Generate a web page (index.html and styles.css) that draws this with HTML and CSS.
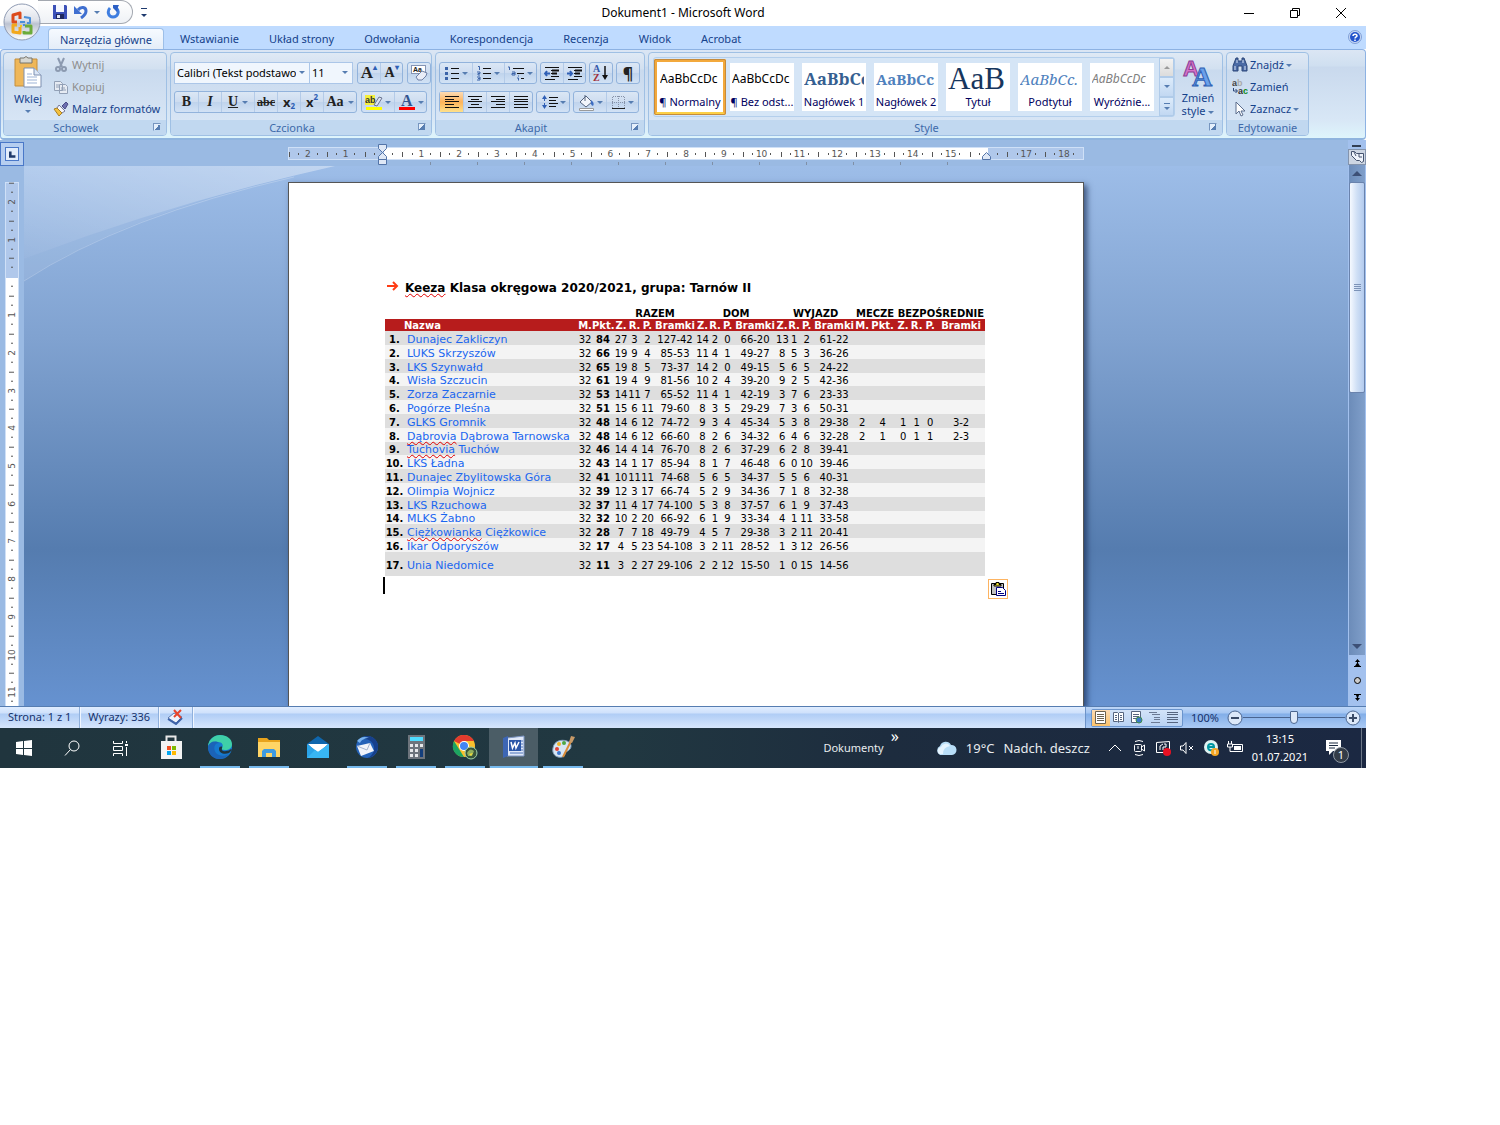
FILE: index.html
```html
<!DOCTYPE html>
<html lang="pl">
<head>
    <meta charset="UTF-8">
    <meta name="viewport" content="width=device-width, initial-scale=1.0">
    <title>Dokument1 - Microsoft Word</title>
    <link rel="stylesheet" href="styles.css">
</head>
<body>

<div class="screen">

    <!-- Title bar -->
    <header class="titlebar">
        <div class="quick">
            <div class="quick-bar">
                <button class="quick-btn" aria-label="Zapisz">
                    <svg width="16" height="16" viewBox="0 0 16 16"><path d="M1 1h13l1 1v13H1z" fill="#3b50b8"/><path d="M4 1h8v7H4z" fill="#f4f7ff"/><path d="M4 10h8v5H4z" fill="#20285e"/><path d="M5 11h3v3H5z" fill="#dfe6f8"/></svg>
                </button>
                <button class="quick-btn" aria-label="Cofnij">
                    <svg width="14" height="14" viewBox="0 0 14 14"><path d="M4 5c3-4 8-3 8 1 0 3-2 5-5 7" fill="none" stroke="#3f6fd0" stroke-width="3"/><path d="M0 1v8h8z" fill="#3f6fd0"/></svg>
                </button>
                <span class="arrow"></span>
                <button class="quick-btn redo" aria-label="Powtórz">
                    <svg width="14" height="14" viewBox="0 0 14 14"><path d="M4 3C1 6 2 12 7 12s7-6 3-9" fill="none" stroke="#3f7ee0" stroke-width="3"/><path d="M7 0h6l-1 2-1 5-4-4z" fill="#2b5fc4"/></svg>
                </button>
            </div>
            <button class="quick-more" aria-label="Dostosuj pasek"><span class="arrow dark"></span></button>
        </div>
        <h1 class="title">Dokument1 - Microsoft Word</h1>
        <div class="window-buttons">
            <button aria-label="Minimalizuj"><svg width="12" height="12" viewBox="0 0 12 12"><path d="M1 6.5h10" stroke="#000"/></svg></button>
            <button aria-label="Przywróć"><svg width="12" height="12" viewBox="0 0 12 12"><path d="M1.500 3.500h7v7h-7zM3.500 3V1.500h7v7H9" fill="none" stroke="#000"/></svg></button>
            <button aria-label="Zamknij"><svg width="12" height="12" viewBox="0 0 12 12"><path d="M1 1l10 10M11 1L1 11" stroke="#000"/></svg></button>
        </div>
        <button class="office" aria-label="Przycisk pakietu Office">
            <svg width="40" height="40" viewBox="0 0 40 40">
                <defs>
                    <linearGradient id="orb" x1="0" y1="0" x2="0" y2="1"><stop offset="0" stop-color="#fdfdfe"/><stop offset=".45" stop-color="#dde1ea"/><stop offset=".55" stop-color="#bcc3d2"/><stop offset="1" stop-color="#fff"/></linearGradient>
                </defs>
                <circle cx="20" cy="20" r="18" fill="url(#orb)" stroke="#8f9bb3"/>
                <g fill="none" stroke-width="3" stroke-linejoin="round">
                    <path d="M15 20h-4v-7l7-2v6" stroke="#dc4a1c"/>
                    <path d="M22 15l6 1v5h-3M20 20h3" stroke="#4a8fd8" stroke-width="2"/>
                    <path d="M15 23h-4v7l7 1v-6" stroke="#f2a81e"/>
                    <path d="M22 29v2h7v-7h-6" stroke="#6cab3a"/>
                </g>
                <path d="M18 19h2v2h-2zM21 22h2v2h-2z" fill="#4a8fd8"/>
                <path d="M18 23h2v2h-2z" fill="#f2c81e"/>
            </svg>
        </button>
    </header>

    <!-- Ribbon tabs -->
    <nav class="tabs">
        <a href="#" class="tab active">Narzędzia główne</a>
        <a href="#" class="tab">Wstawianie</a>
        <a href="#" class="tab">Układ strony</a>
        <a href="#" class="tab">Odwołania</a>
        <a href="#" class="tab">Korespondencja</a>
        <a href="#" class="tab">Recenzja</a>
        <a href="#" class="tab">Widok</a>
        <a href="#" class="tab">Acrobat</a>
        <button class="help" aria-label="Pomoc">
            <svg width="14" height="14" viewBox="0 0 14 14"><circle cx="7" cy="7" r="6.5" fill="#c8d8f4" stroke="#7f9fd6"/><circle cx="7" cy="7" r="5" fill="#2455cc"/><path d="M5 6c0-2.500 4-2.500 4 0C9 7 7 7 7 8.500M7 9.500v1.500" fill="none" stroke="#fff" stroke-width="1.500"/></svg>
        </button>
    </nav>

    <!-- Ribbon -->
    <div class="ribbon">
        <section class="group clipboard">
            <div class="group-body">
                <button class="paste">
                    <svg width="30" height="32" viewBox="0 0 30 32"><path d="M2 3h22v27H2z" fill="#efb759" stroke="#c48f3f"/><path d="M7 2h4q2-3 4 0h4v5H7z" fill="#d7d7d2" stroke="#77746c"/><path d="M11 12h10l7 7v12H11z" fill="#fff" stroke="#7c8fb0"/><path d="M21 12v7h7" fill="#dbe6f6" stroke="#7c8fb0"/><path d="M14 18h5M14 21h10M14 24h10M14 27h10" stroke="#9db3d6"/></svg>
                    <span>Wklej</span>
                    <span class="arrow"></span>
                </button>
                <div class="stack">
                    <button class="line disabled"><svg width="16" height="16" viewBox="0 0 16 16"><path d="M5 1l4 9M11 1L7 10" stroke="#8c9ab0" stroke-width="2"/><circle cx="5" cy="12" r="2" fill="none" stroke="#8c9ab0" stroke-width="2"/><circle cx="11" cy="12" r="2" fill="none" stroke="#8c9ab0" stroke-width="2"/></svg>Wytnij</button>
                    <button class="line disabled"><svg width="16" height="16" viewBox="0 0 16 16"><path d="M1.500 2.500h6l2 2v7h-8zM6.500 5.500h6l2 2v7h-8z" fill="#e6ebf3" stroke="#92a0b6"/><path d="M3 6h3M3 8h3M8 9h4M8 11h5" stroke="#92a0b6"/></svg>Kopiuj</button>
                    <button class="line"><svg width="16" height="16" viewBox="0 0 16 16"><path d="M9 5l4-4 2 2-3 5z" fill="#6d6fb0" stroke="#4a4c88"/><path d="M6 4l6 6-3 2-5-5z" fill="#f5f5fa" stroke="#777a9b"/><path d="M1 8l3-1 5 5-3 3z" fill="#f4c13d" stroke="#a9802a"/></svg>Malarz formatów</button>
                </div>
            </div>
            <footer class="group-label">Schowek<i class="launch"></i></footer>
        </section>

        <section class="group font">
            <div class="group-body rows">
                <div class="tool-row">
                    <div class="combos">
                        <div class="combo wide"><select aria-label="Czcionka"><option>Calibri (Tekst podstawowy)</option></select></div>
                        <div class="combo"><select aria-label="Rozmiar czcionki"><option>11</option></select></div>
                    </div>
                    <div class="btns narrow">
                        <button class="serif big" aria-label="Powiększ czcionkę">A<sup>▴</sup></button>
                        <button class="serif" aria-label="Zmniejsz czcionkę">A<sup>▾</sup></button>
                    </div>
                    <div class="btns narrow">
                        <button aria-label="Wyczyść formatowanie"><svg width="18" height="18" viewBox="0 0 18 18"><rect x="1.500" y="1.500" width="14" height="8" fill="#fff" stroke="#8595b5"/><text x="3" y="8" font-size="7" font-weight="bold" font-family="Liberation Sans" fill="#222">Aa</text><path d="M6 13l6-6 5 2-1 3-4 4H8z" fill="#e9edf8" stroke="#6f7fa4"/></svg></button>
                    </div>
                </div>
                <div class="tool-row">
                    <div class="btns">
                        <button class="serif"><b>B</b></button>
                        <button class="serif"><i>I</i></button>
                        <button class="serif drop"><u>U</u><span class="arrow"></span></button>
                        <button class="serif small"><s>abc</s></button>
                        <button class="x">x<sub>2</sub></button>
                        <button class="x">x<sup>2</sup></button>
                        <button class="serif drop">Aa<span class="arrow"></span></button>
                    </div>
                    <div class="btns">
                        <button class="drop" aria-label="Kolor wyróżnienia"><svg width="18" height="18" viewBox="0 0 18 18"><path d="M0 2h10v10H0z" fill="#f5ef3a"/><text x="0" y="10" font-size="9" font-weight="bold" font-family="Liberation Sans" fill="#333">ab</text><path d="M9 12l5-8 3 1-5 8z" fill="#dce4f3" stroke="#6b7590"/><path d="M1 14h16v3H1z" fill="#ff0"/></svg><span class="arrow"></span></button>
                        <button class="drop" aria-label="Kolor czcionki"><svg width="18" height="18" viewBox="0 0 18 18"><text x="3" y="13" font-size="16" font-weight="bold" font-family="Liberation Serif" fill="#33558f">A</text><path d="M1 14h16v3H1z" fill="#f00"/></svg><span class="arrow"></span></button>
                    </div>
                </div>
            </div>
            <footer class="group-label">Czcionka<i class="launch"></i></footer>
        </section>

        <section class="group paragraph">
            <div class="group-body rows">
                <div class="tool-row">
                    <div class="btns">
                        <button class="drop list" aria-label="Punktory"><svg width="15" height="15" viewBox="0 0 15 15"><path d="M6 2.500h8M6 7.500h8M6 12.500h8" stroke="#111"/><path d="M0 1h3v3H0zM0 6h3v3H0zM0 11h3v3H0z" fill="#3b63a8"/></svg><span class="arrow"></span></button>
                        <button class="drop list" aria-label="Numerowanie"><svg width="15" height="15" viewBox="0 0 15 15"><path d="M6 2.500h8M6 7.500h8M6 12.500h8" stroke="#111"/><path d="M1 .5h1.500V4M0 6h3v1.500H1V9h2M0 11h3v3H0M1 12.500h2" fill="none" stroke="#3b63a8"/></svg><span class="arrow"></span></button>
                        <button class="drop list" aria-label="Lista wielopoziomowa"><svg width="17" height="15" viewBox="0 0 17 15"><path d="M5 2.500h11M9 7.500h7M13 12.500h3" stroke="#111"/><path d="M0 1h1.500v3M4 6h3v3H4V7.500h3M10.500 9.500v1M9 12h1.500v2.500" fill="none" stroke="#3b63a8"/></svg><span class="arrow"></span></button>
                    </div>
                    <div class="btns narrow">
                        <button aria-label="Zmniejsz wcięcie"><svg width="16" height="15" viewBox="0 0 16 15"><path d="M1 1.500h14M7 4.500h8M7 7.500h6M7 10.500h8M1 13.500h10" stroke="#111"/><path d="M8 4.500h7M8 7.500h5" stroke="#111" stroke-width="2"/><path d="M6 7.500H1M3 5L1 7.500 3 10" fill="none" stroke="#2f5fb5" stroke-width="2"/></svg></button>
                        <button aria-label="Zwiększ wcięcie"><svg width="16" height="15" viewBox="0 0 16 15"><path d="M1 1.500h14M7 4.500h8M7 7.500h6M7 10.500h8M1 13.500h10" stroke="#111"/><path d="M8 4.500h7M8 7.500h5" stroke="#111" stroke-width="2"/><path d="M0 7.500h5M3 5l2 2.500L3 10" fill="none" stroke="#2f5fb5" stroke-width="2"/></svg></button>
                    </div>
                    <div class="btns narrow">
                        <button aria-label="Sortuj"><svg width="18" height="18" viewBox="0 0 18 18"><text x="1" y="8" font-size="10" font-weight="bold" font-family="Liberation Serif" fill="#3558a8">A</text><text x="1" y="17" font-size="10" font-weight="bold" font-family="Liberation Serif" fill="#a0303a">Z</text><path d="M13 2v11" stroke="#111" stroke-width="1.500"/><path d="M10 11h6l-3 5z" fill="#111"/></svg></button>
                    </div>
                    <div class="btns narrow">
                        <button class="pilcrow" aria-label="Pokaż wszystko">¶</button>
                    </div>
                </div>
                <div class="tool-row">
                    <div class="btns">
                        <button class="on" aria-label="Do lewej"><svg width="16" height="12" viewBox="0 0 16 12"><path d="M1 .5h14M1 3.500h9M1 5.500h14M1 8.500h9M1 11.500h14" stroke="#111"/></svg></button>
                        <button aria-label="Wyśrodkuj"><svg width="16" height="12" viewBox="0 0 16 12"><path d="M1 .5h14M4 3.500h8M1 5.500h14M4 8.500h8M1 11.500h14" stroke="#111"/></svg></button>
                        <button aria-label="Do prawej"><svg width="16" height="12" viewBox="0 0 16 12"><path d="M1 .5h14M6 3.500h9M1 5.500h14M6 8.500h9M1 11.500h14" stroke="#111"/></svg></button>
                        <button aria-label="Wyjustuj"><svg width="16" height="12" viewBox="0 0 16 12"><path d="M1 .5h14M1 3.500h14M1 5.500h14M1 8.500h14M1 11.500h14" stroke="#111"/></svg></button>
                    </div>
                    <div class="btns">
                        <button class="drop" aria-label="Interlinia"><svg width="17" height="16" viewBox="0 0 17 16"><path d="M3.500 2v12" stroke="#2f5fb5" stroke-dasharray="5 2"/><path d="M1 5l2.500-4L6 5zM1 11l2.500 4L6 11z" fill="#2f5fb5"/><path d="M8 3.500h9M8 6.500h7M8 9.500h9M8 12.500h7" stroke="#111"/></svg><span class="arrow"></span></button>
                    </div>
                    <div class="btns">
                        <button class="drop" aria-label="Cieniowanie"><svg width="17" height="17" viewBox="0 0 17 17"><path d="M2 8l6-6 6 6-6 5z" fill="#f2f5fb" stroke="#55647f"/><path d="M7 1v6" stroke="#55647f"/><path d="M13 6q4 3 2 6-3-1-2-6z" fill="#3d6dc2"/><path d="M1.500 14.500h14v2h-14z" fill="#fff" stroke="#9a9a9a"/></svg><span class="arrow"></span></button>
                        <button class="drop" aria-label="Obramowanie"><svg width="15" height="15" viewBox="0 0 15 15"><path d="M1.500 13V1.500h12V13M7.500 1v12M1 7.500h13" fill="none" stroke="#8792a8" stroke-dasharray="1 1"/><path d="M1 13.500h13" stroke="#222"/></svg><span class="arrow"></span></button>
                    </div>
                </div>
            </div>
            <footer class="group-label">Akapit<i class="launch"></i></footer>
        </section>

        <section class="group styles">
            <div class="group-body">
                <div class="gallery">
                    <button class="style selected"><span class="sample">AaBbCcDc</span><span class="style-name">¶ Normalny</span></button>
                    <button class="style"><span class="sample">AaBbCcDc</span><span class="style-name">¶ Bez odst...</span></button>
                    <button class="style"><span class="sample heading1">AaBbCc</span><span class="style-name">Nagłówek 1</span></button>
                    <button class="style"><span class="sample heading2">AaBbCc</span><span class="style-name">Nagłówek 2</span></button>
                    <button class="style"><span class="sample headline">AaB</span><span class="style-name">Tytuł</span></button>
                    <button class="style"><span class="sample subtitle">AaBbCc.</span><span class="style-name">Podtytuł</span></button>
                    <button class="style"><span class="sample emphasis">AaBbCcDc</span><span class="style-name">Wyróżnie...</span></button>
                    <div class="gallery-scroll">
                        <button class="off" aria-label="W górę"><span class="arrow up"></span></button>
                        <button aria-label="W dół"><span class="arrow"></span></button>
                        <button aria-label="Więcej"><span class="more"><span class="arrow"></span></span></button>
                    </div>
                </div>
                <button class="change">
                    <svg width="32" height="32" viewBox="0 0 32 32"><text x="1" y="19" font-size="22" font-weight="bold" font-family="Liberation Sans" fill="#d673c8" stroke="#8b3f96">A</text><text x="10" y="29" font-size="28" font-weight="bold" font-family="Liberation Serif" fill="#6aa0ea" stroke="#2f60b4">A</text></svg>
                    <span>Zmień</span>
                    <span>style <span class="arrow"></span></span>
                </button>
            </div>
            <footer class="group-label">Style<i class="launch"></i></footer>
        </section>

        <section class="group editing">
            <div class="group-body">
                <div class="stack">
                    <button class="line"><svg width="16" height="16" viewBox="0 0 16 16"><path d="M4 1h2v3h4V1h2l3 8v5h-5v-5H6v5H1V9z" fill="#4b6ba5" stroke="#2c4779"/><path d="M3 9v4M13 9v4M5 3v3M11 3v3" stroke="#dbe6f8"/></svg>Znajdź<span class="arrow"></span></button>
                    <button class="line"><svg width="16" height="16" viewBox="0 0 16 16"><text x="0" y="7" font-size="9" font-weight="bold" font-family="Liberation Sans" fill="#444">a<tspan fill="#aaa">b</tspan></text><text x="6" y="15" font-size="9" font-weight="bold" font-family="Liberation Sans" fill="#333">a<tspan fill="#0a8a1a">c</tspan></text><path d="M1.500 9v3H5M3.500 10L5.500 12l-2 2" fill="none" stroke="#2c4779"/></svg>Zamień</button>
                    <button class="line"><svg width="16" height="16" viewBox="0 0 16 16"><path d="M4 1v12l3-3 2 5 2-1-2-4h4z" fill="#fff" stroke="#5b6c8c"/></svg>Zaznacz<span class="arrow"></span></button>
                </div>
            </div>
            <footer class="group-label plain">Edytowanie</footer>
        </section>
    </div>

    <!-- Document area with rulers -->
    <main class="workspace">
        <div class="corner"><button aria-label="Tabulator lewy"><svg width="14" height="14" viewBox="0 0 14 14"><path d="M5 4v6h6" fill="none" stroke="#1f3a6b" stroke-width="3"/></svg></button></div>
        <div class="ruler-row">
            <div class="ruler">
                <span>2</span><span>1</span><span></span><span>1</span><span>2</span><span>3</span><span>4</span><span>5</span><span>6</span><span>7</span><span>8</span><span>9</span><span>10</span><span>11</span><span>12</span><span>13</span><span>14</span><span>15</span><span></span><span>17</span><span>18</span>
                <svg class="marker left" width="11" height="22" viewBox="0 0 11 22"><path d="M1.500.5h8v4l-4 4 4 4v3h-8v-3l4-4-4-4zM1.500 15.500h8v5h-8z" fill="#dfe8f6" stroke="#5374a8"/></svg>
                <svg class="marker right" width="11" height="22" viewBox="0 0 11 22"><path d="M1.500 15.500v-3l4-4 4 4v3z" fill="#dfe8f6" stroke="#5374a8"/></svg>
            </div>
        </div>
        <div class="vruler-col">
            <div class="vruler">
                <span>2</span><span>1</span><span></span><span>1</span><span>2</span><span>3</span><span>4</span><span>5</span><span>6</span><span>7</span><span>8</span><span>9</span><span>10</span><span>11</span>
            </div>
        </div>
        <div class="canvas">
            <svg class="swoosh" width="330" height="130" viewBox="0 0 330 130">
                <defs><linearGradient id="sheen" x1="0" y1="1" x2="1" y2="0"><stop offset="0" stop-color="#fff" stop-opacity=".1"/><stop offset="1" stop-color="#fff" stop-opacity=".38"/></linearGradient></defs>
                <path d="M0 0h311Q150 36 0 93z" fill="url(#sheen)"/>
                <path d="M311 0Q110 42 0 115V93Q150 36 311 0z" fill="#fff" fill-opacity=".08"/>
                <path d="M270 11Q100 50 0 115" fill="none" stroke="#fff" stroke-opacity=".22"/>
            </svg>
            <article class="page">
                <h2 class="doc-title">
                    <svg width="12" height="10" viewBox="0 0 12 10"><path d="M0 5h10M6 1l4 4-4 4" fill="none" stroke="#ff3c14" stroke-width="2"/></svg>
                    <span><span class="typo">Keeza</span> Klasa okręgowa 2020/2021, grupa: Tarnów II</span>
                </h2>
                <table class="standings">
                    <colgroup>
                        <col class="c-no"><col class="c-name"><col class="c-m"><col class="c-pkt">
                        <col class="c-m"><col class="c-n"><col class="c-n"><col class="c-goals">
                        <col class="c-n"><col class="c-s"><col class="c-n"><col class="c-goals">
                        <col class="c-s"><col class="c-s"><col class="c-n"><col class="c-goals">
                        <col class="c-m"><col class="c-wide"><col class="c-m"><col class="c-n"><col class="c-m"><col>
                    </colgroup>
                    <thead>
                        <tr class="sections"><th colspan="4"></th><th colspan="4">RAZEM</th><th colspan="4">DOM</th><th colspan="4">WYJAZD</th><th colspan="6">MECZE BEZPOŚREDNIE</th></tr>
                        <tr class="heads"><th></th><th class="name">Nazwa</th><th>M.</th><th>Pkt.</th><th>Z.</th><th>R.</th><th>P.</th><th>Bramki</th><th>Z.</th><th>R.</th><th>P.</th><th>Bramki</th><th>Z.</th><th>R.</th><th>P.</th><th>Bramki</th><th>M.</th><th>Pkt.</th><th>Z.</th><th>R.</th><th>P.</th><th>Bramki</th></tr>
                    </thead>
                    <tbody>
                        <tr><th>1.</th><td class="name"><a href="#">Dunajec Zakliczyn</a></td><td>32</td><td><b>84</b></td><td>27</td><td>3</td><td>2</td><td>127-42</td><td>14</td><td>2</td><td>0</td><td>66-20</td><td>13</td><td>1</td><td>2</td><td>61-22</td><td colspan="6"></td></tr>
                        <tr><th>2.</th><td class="name"><a href="#">LUKS Skrzyszów</a></td><td>32</td><td><b>66</b></td><td>19</td><td>9</td><td>4</td><td>85-53</td><td>11</td><td>4</td><td>1</td><td>49-27</td><td>8</td><td>5</td><td>3</td><td>36-26</td><td colspan="6"></td></tr>
                        <tr><th>3.</th><td class="name"><a href="#">LKS Szynwałd</a></td><td>32</td><td><b>65</b></td><td>19</td><td>8</td><td>5</td><td>73-37</td><td>14</td><td>2</td><td>0</td><td>49-15</td><td>5</td><td>6</td><td>5</td><td>24-22</td><td colspan="6"></td></tr>
                        <tr><th>4.</th><td class="name"><a href="#">Wisła Szczucin</a></td><td>32</td><td><b>61</b></td><td>19</td><td>4</td><td>9</td><td>81-56</td><td>10</td><td>2</td><td>4</td><td>39-20</td><td>9</td><td>2</td><td>5</td><td>42-36</td><td colspan="6"></td></tr>
                        <tr><th>5.</th><td class="name"><a href="#">Zorza Zaczarnie</a></td><td>32</td><td><b>53</b></td><td>14</td><td>11</td><td>7</td><td>65-52</td><td>11</td><td>4</td><td>1</td><td>42-19</td><td>3</td><td>7</td><td>6</td><td>23-33</td><td colspan="6"></td></tr>
                        <tr><th>6.</th><td class="name"><a href="#">Pogórze Pleśna</a></td><td>32</td><td><b>51</b></td><td>15</td><td>6</td><td>11</td><td>79-60</td><td>8</td><td>3</td><td>5</td><td>29-29</td><td>7</td><td>3</td><td>6</td><td>50-31</td><td colspan="6"></td></tr>
                        <tr><th>7.</th><td class="name"><a href="#">GLKS Gromnik</a></td><td>32</td><td><b>48</b></td><td>14</td><td>6</td><td>12</td><td>74-72</td><td>9</td><td>3</td><td>4</td><td>45-34</td><td>5</td><td>3</td><td>8</td><td>29-38</td><td>2</td><td>4</td><td>1</td><td>1</td><td>0</td><td>3-2</td></tr>
                        <tr><th>8.</th><td class="name"><a href="#"><span class="typo">Dąbrovia</span> Dąbrowa Tarnowska</a></td><td>32</td><td><b>48</b></td><td>14</td><td>6</td><td>12</td><td>66-60</td><td>8</td><td>2</td><td>6</td><td>34-32</td><td>6</td><td>4</td><td>6</td><td>32-28</td><td>2</td><td>1</td><td>0</td><td>1</td><td>1</td><td>2-3</td></tr>
                        <tr><th>9.</th><td class="name"><a href="#"><span class="typo">Tuchovia</span> Tuchów</a></td><td>32</td><td><b>46</b></td><td>14</td><td>4</td><td>14</td><td>76-70</td><td>8</td><td>2</td><td>6</td><td>37-29</td><td>6</td><td>2</td><td>8</td><td>39-41</td><td colspan="6"></td></tr>
                        <tr><th>10.</th><td class="name"><a href="#">LKS Ładna</a></td><td>32</td><td><b>43</b></td><td>14</td><td>1</td><td>17</td><td>85-94</td><td>8</td><td>1</td><td>7</td><td>46-48</td><td>6</td><td>0</td><td>10</td><td>39-46</td><td colspan="6"></td></tr>
                        <tr><th>11.</th><td class="name"><a href="#">Dunajec Zbylitowska Góra</a></td><td>32</td><td><b>41</b></td><td>10</td><td>11</td><td>11</td><td>74-68</td><td>5</td><td>6</td><td>5</td><td>34-37</td><td>5</td><td>5</td><td>6</td><td>40-31</td><td colspan="6"></td></tr>
                        <tr><th>12.</th><td class="name"><a href="#">Olimpia Wojnicz</a></td><td>32</td><td><b>39</b></td><td>12</td><td>3</td><td>17</td><td>66-74</td><td>5</td><td>2</td><td>9</td><td>34-36</td><td>7</td><td>1</td><td>8</td><td>32-38</td><td colspan="6"></td></tr>
                        <tr><th>13.</th><td class="name"><a href="#">LKS Rzuchowa</a></td><td>32</td><td><b>37</b></td><td>11</td><td>4</td><td>17</td><td>74-100</td><td>5</td><td>3</td><td>8</td><td>37-57</td><td>6</td><td>1</td><td>9</td><td>37-43</td><td colspan="6"></td></tr>
                        <tr><th>14.</th><td class="name"><a href="#">MLKS Żabno</a></td><td>32</td><td><b>32</b></td><td>10</td><td>2</td><td>20</td><td>66-92</td><td>6</td><td>1</td><td>9</td><td>33-34</td><td>4</td><td>1</td><td>11</td><td>33-58</td><td colspan="6"></td></tr>
                        <tr><th>15.</th><td class="name"><a href="#"><span class="typo">Ciężkowianka</span> Ciężkowice</a></td><td>32</td><td><b>28</b></td><td>7</td><td>7</td><td>18</td><td>49-79</td><td>4</td><td>5</td><td>7</td><td>29-38</td><td>3</td><td>2</td><td>11</td><td>20-41</td><td colspan="6"></td></tr>
                        <tr><th>16.</th><td class="name"><a href="#">Ikar Odporyszów</a></td><td>32</td><td><b>17</b></td><td>4</td><td>5</td><td>23</td><td>54-108</td><td>3</td><td>2</td><td>11</td><td>28-52</td><td>1</td><td>3</td><td>12</td><td>26-56</td><td colspan="6"></td></tr>
                        <tr class="last"><th>17.</th><td class="name"><a href="#">Unia Niedomice</a></td><td>32</td><td><b>11</b></td><td>3</td><td>2</td><td>27</td><td>29-106</td><td>2</td><td>2</td><td>12</td><td>15-50</td><td>1</td><td>0</td><td>15</td><td>14-56</td><td colspan="6"></td></tr>
                    </tbody>
                </table>
                <div class="after-table">
                    <span class="caret"></span>
                    <button class="paste-options" aria-label="Opcje wklejania"><svg width="16" height="16" viewBox="0 0 16 16"><path d="M1.500 2.500h12v11h-12z" fill="#c0c0c0" stroke="#000"/><path d="M4 3.500h2V1.500h3v2h2V5H4z" fill="#f0e030" stroke="#000"/><path d="M6.500 6.500h6l3 3v5h-9z" fill="#fff" stroke="#000080"/><path d="M8 10.500h3M8 12.500h6" stroke="#000080"/></svg></button>
                </div>
            </article>
        </div>
        <div class="scroll-col">
            <span class="split"></span>
            <button class="ruler-toggle" aria-label="Linijka"><svg width="15" height="14" viewBox="0 0 15 14"><path d="M1.500 1.500h3l2 2h7v8l-2 1-2-2h-3l-5-5z" fill="#eef3fb" stroke="#44536f"/><path d="M4 2l2 4M9 4v3h3" fill="none" stroke="#44536f"/></svg></button>
            <div class="track">
                <button aria-label="Przewiń w górę"><span class="tri up"></span></button>
                <div class="thumb"></div>
                <button class="down" aria-label="Przewiń w dół"><span class="tri"></span></button>
            </div>
            <div class="browse">
                <button aria-label="Poprzednia strona"><svg width="7" height="9" viewBox="0 0 7 9"><path d="M3.500 0L6 3H4v1l2 3h1v1H0V7h1l2-3V3H1z"/></svg></button>
                <button aria-label="Wybierz obiekt"><svg width="9" height="9" viewBox="0 0 9 9"><circle cx="4.500" cy="4.500" r="3" fill="#ccc" stroke="#000"/></svg></button>
                <button aria-label="Następna strona"><svg width="7" height="9" viewBox="0 0 7 9"><path d="M0 1h7v1H5L4 5h2L3.500 8 1 5h2L2 2H0z"/></svg></button>
            </div>
        </div>
    </main>

    <!-- Status bar -->
    <div class="statusbar">
        <span class="status">Strona: 1 z 1</span>
        <span class="status">Wyrazy: 336</span>
        <button class="status proof" aria-label="Sprawdzanie pisowni"><svg width="17" height="16" viewBox="0 0 17 16"><path d="M1 9l6-5 8 4-6 6z" fill="#eef3fc" stroke="#5b78b0"/><path d="M1 10l8 5 6-6" fill="none" stroke="#3c62a8" stroke-width="2"/><path d="M7 1l7 8M14 1L7 8" stroke="#e8452c" stroke-width="2"/></svg></button>
        <div class="view-area">
            <div class="views">
                <button class="on" aria-label="Układ wydruku"><svg width="13" height="13" viewBox="0 0 13 13"><path d="M1.500.5h10v12h-10z" fill="#fff" stroke="#6b6250"/><path d="M3 3.500h7M3 5.500h7M3 7.500h7M3 9.500h7" stroke="#6b6250"/></svg></button>
                <button aria-label="Odczyt pełnoekranowy"><svg width="13" height="13" viewBox="0 0 13 13"><path d="M1.500 1.500h4l1 1 1-1h4v9h-4l-1 1-1-1h-4zM6.500 2v9" fill="#fff" stroke="#56657f"/><path d="M3 4.500h2M3 6.500h2M3 8.500h2M8 4.500h2M8 6.500h2M8 8.500h2" stroke="#56657f"/></svg></button>
                <button aria-label="Układ sieci Web"><svg width="13" height="13" viewBox="0 0 13 13"><path d="M1.500.5h9v11h-9z" fill="#fff" stroke="#56657f"/><path d="M3 3.500h6M3 5.500h6M3 7.500h3" stroke="#56657f"/><circle cx="9" cy="9" r="3" fill="#3c78c8" stroke="#3f8f4a"/></svg></button>
                <button aria-label="Konspekt"><svg width="13" height="13" viewBox="0 0 13 13"><path d="M1 1.500h8M4 3.500h8M6 6.500h6M6 8.500h6M3 11.500h9" stroke="#6c7a94"/></svg></button>
                <button aria-label="Wersja robocza"><svg width="13" height="13" viewBox="0 0 13 13"><path d="M1 1.500h11M1 3.500h11M1 6.500h11M1 8.500h11M1 11.500h11" stroke="#56657f"/></svg></button>
            </div>
            <span class="percent">100%</span>
            <button class="zoom-btn" aria-label="Pomniejsz"><svg width="16" height="16" viewBox="0 0 16 16"><circle cx="8" cy="8" r="7" fill="#dce8f9" stroke="#4a6590"/><path d="M4 8h8" stroke="#3a4a66" stroke-width="2"/></svg></button>
            <input class="zoom-range" type="range" min="0" max="100" value="50" aria-label="Powiększenie">
            <button class="zoom-btn" aria-label="Powiększ"><svg width="16" height="16" viewBox="0 0 16 16"><circle cx="8" cy="8" r="7" fill="#dce8f9" stroke="#4a6590"/><path d="M4 8h8M8 4v8" stroke="#3a4a66" stroke-width="2"/></svg></button>
        </div>
    </div>

    <!-- Windows taskbar -->
    <div class="taskbar">
        <div class="system-apps">
            <button aria-label="Start"><svg width="16" height="16" viewBox="0 0 16 16"><path d="M0 2l7-1v7H0zM8 1l8-1v8H8zM0 9h7v6l-7-1zM8 9h8v7l-8-1z" fill="#fff"/></svg></button>
            <button aria-label="Wyszukaj"><svg width="16" height="16" viewBox="0 0 16 16"><circle cx="10" cy="6" r="5" fill="none" stroke="#fff"/><path d="M6.500 9.500L1 15.500" stroke="#fff"/></svg></button>
            <button aria-label="Widok zadań"><svg width="16" height="16" viewBox="0 0 16 16"><path d="M1.500 1v2.500h9V1M1.500 6.500h9v4h-9zM1.500 16v-2.500h9V16M14.500 1v2M14.500 7v9" fill="none" stroke="#fff"/><path d="M13 4h3v2h-3z" fill="#fff"/></svg></button>
        </div>
        <div class="apps">
            <button aria-label="Microsoft Store"><svg width="24" height="24" viewBox="0 0 24 24"><path d="M7.500 7V1.500h9V7" fill="none" stroke="#e8e8e8" stroke-width="2"/><path d="M2 6h21v18H2z" fill="#f3f3f3"/><path d="M8 11h4v4H8z" fill="#f25022"/><path d="M13 11h4v4h-4z" fill="#7fba00"/><path d="M8 16h4v4H8z" fill="#00a4ef"/><path d="M13 16h4v4h-4z" fill="#ffb900"/></svg></button>
            <button class="open" aria-label="Microsoft Edge"><svg width="24" height="24" viewBox="0 0 24 24"><circle cx="12" cy="12" r="12" fill="#1679cf"/><path d="M0 11C1 4 6 0 12 0c7 0 12 4 12 9 0 4-3 6-7 6-3 0-4-1-3-2 2-3 0-6-4-6-4-1-8 1-10 4z" fill="#3fd0a8"/><path d="M0 12c1-5 7-7 11-4-5 0-6 6-3 10 3 3 8 4 13 1-3 4-7 5-10 5C5 24 0 19 0 12z" fill="#1b63b8"/><path d="M14 13c-1 2 1 4 4 3 2 0 4-1 5-2l1 1-3 3c-5 2-10 0-10-4 0-3 4-3 3-1z" fill="#20343f"/></svg></button>
            <button class="open" aria-label="Eksplorator plików"><svg width="24" height="24" viewBox="0 0 24 24"><path d="M1 3h9l2 2h11v17H1z" fill="#e8a31c"/><path d="M1 7h22v15H1z" fill="#ffd566"/><path d="M5 22v-6l2-2h10l2 2v6h-4v-4H9v4z" fill="#3f9be0"/></svg></button>
            <button aria-label="Poczta"><svg width="24" height="24" viewBox="0 0 24 24"><path d="M1 9L12 1l11 8v14H1z" fill="#0f66ad"/><path d="M2 9h20L12 19z" fill="#fff"/><path d="M1 9l11 8 11-8v14H1z" fill="#2aa3e8"/><path d="M1 23l8-8 3 2 11-8v14z" fill="#38b6f4"/></svg></button>
            <button class="open" aria-label="Thunderbird"><svg width="24" height="24" viewBox="0 0 24 24"><circle cx="12" cy="12" r="11" fill="#2462b8"/><path d="M12 1c8 0 12 7 11 12-1 6-6 10-10 10 5-3 8-9 5-14-2-4-6-5-10-5 1-2 2-3 4-3z" fill="#17408c"/><path d="M2 11l13-3 4 8-13 5z" fill="#f1f4fa"/><path d="M2 11l10 4 3-7" fill="none" stroke="#a5b4d0"/><path d="M2 6c3-4 8-5 12-3-4 0-8 2-9 5z" fill="#7ab4f0"/></svg></button>
            <button class="open" aria-label="Kalkulator"><svg width="24" height="24" viewBox="0 0 24 24"><path d="M4 0h17v24H4z" fill="#6d747c"/><path d="M6 2h13v4H6z" fill="#4fdcff"/><path d="M6 9h3v3H6zM11 9h3v3h-3zM16 9h3v3h-3zM6 14h3v3H6zM11 14h3v3h-3zM6 19h3v3H6zM11 19h3v3h-3z" fill="#e6e8ea"/><path d="M16 14h3v8h-3z" fill="#143f7c"/></svg></button>
            <button class="open" aria-label="Google Chrome"><svg width="26" height="26" viewBox="0 0 26 26"><circle cx="12" cy="12" r="11" fill="#fbc02d"/><path d="M2 7C5 2 8 1 12 1s8 2 10 6H12z" fill="#e33b2e"/><path d="M2 7l5 8 5 8C4 23-2 15 2 7z" fill="#1da462"/><path d="M2 7h10v5z" fill="#e33b2e"/><circle cx="12" cy="12" r="5" fill="#fff"/><circle cx="12" cy="12" r="4" fill="#4285f4"/><circle cx="19" cy="19" r="6" fill="#38543a" stroke="#9ed0a8"/><path d="M15 19q3-6 7-2l-2 5h-4z" fill="#8fae5c"/><path d="M17 20l4-1-2 3z" fill="#f0dc3a"/></svg></button>
            <button class="open current" aria-label="Microsoft Word"><svg width="24" height="24" viewBox="0 0 24 24"><path d="M5 3l17-2v20H5z" fill="#dfe8f8" stroke="#7d96c4"/><path d="M14 6h7M14 9h7M14 12h7M14 15h7M8 18h13" stroke="#4c73b8"/><path d="M1 3l5-2v20l-5 2z" fill="#3d66b4"/><path d="M7 5h12v11H7z" fill="#2b57a8"/><path d="M9 7l1.500 6L13 8l1 5L17 7" fill="none" stroke="#fff" stroke-width="1.500"/></svg></button>
            <button class="open" aria-label="Paint"><svg width="24" height="24" viewBox="0 0 24 24"><path d="M2 13C3 6 10 4 16 6c5 2 5 7 2 9-2 2-3 1-4 3 0 4-4 5-7 4-4-1-6-5-5-9z" fill="#d7e6f3" stroke="#7f9bb8"/><circle cx="6" cy="14" r="2" fill="#e04338"/><circle cx="8" cy="9" r="2" fill="#f0b428"/><circle cx="13" cy="8" r="2" fill="#4da843"/><circle cx="8" cy="18" r="2" fill="#3c78d0"/><path d="M12 22l8-16" stroke="#d98a36" stroke-width="2"/><path d="M18 7l2-6 4 1-3 6z" fill="#c79a68"/></svg></button>
        </div>
        <div class="toolbar-docs"><span>Dokumenty</span><span class="chev">»</span></div>
        <a href="#" class="weather">
            <svg width="22" height="16" viewBox="0 0 22 16"><path d="M5 15a5 5 0 0 1 0-9 6 6 0 0 1 11-1 5 5 0 0 1 1 10z" fill="#b8def8"/><path d="M4 14a4 4 0 0 1 2-7 5 5 0 0 1 9-1q-7 1-7 8z" fill="#e6f5ff"/></svg>
            <span>19°C</span><span>Nadch. deszcz</span>
        </a>
        <div class="tray">
            <svg width="16" height="16" viewBox="0 0 16 16"><path d="M2 11l6-6 6 6" fill="none" stroke="#fff"/></svg>
            <svg width="16" height="16" viewBox="0 0 16 16"><path d="M4 1.500q4-2 8 0M4 14.500q4 2 8 0" fill="none" stroke="#fff"/><rect x="3.500" y="4.500" width="7" height="7" rx="1" fill="none" stroke="#fff"/><path d="M10.500 7l3-2v6l-3-2M7 6v3" fill="none" stroke="#fff"/></svg>
            <svg width="16" height="16" viewBox="0 0 16 16"><path d="M10 12.500H1.500v-10l13-1V9" fill="none" stroke="#fff"/><path d="M5 10V6l3-2M8 10V7h3V4H9" fill="none" stroke="#fff"/><circle cx="12" cy="12" r="4" fill="#e81123"/></svg>
            <svg width="16" height="16" viewBox="0 0 16 16"><path d="M1.500 6v4H4l3 3.500v-11L4 6zM10 6l4 4M14 6l-4 4" fill="none" stroke="#fff"/></svg>
            <svg width="16" height="16" viewBox="0 0 16 16"><circle cx="8" cy="7" r="7" fill="#dff3f2"/><path d="M5 7h6c0-4-6-4-6 0s4 4 6 2" fill="none" stroke="#0096a0" stroke-width="2"/><circle cx="12" cy="12" r="4" fill="#f5a623"/><path d="M12 10v4" stroke="#fff"/></svg>
            <svg width="16" height="16" viewBox="0 0 16 16"><path d="M6 4.500h9.500v7H6" fill="none" stroke="#fff"/><path d="M7 6h7v4H7z" fill="#fff"/><path d="M1.500 1v3M4.500 1v3M.5 4h5v3h-5zM3 7v4.500h4" fill="none" stroke="#fff"/></svg>
        </div>
        <div class="clock"><time>13:15</time><time>01.07.2021</time></div>
        <button class="notify" aria-label="Powiadomienia">
            <svg width="18" height="18" viewBox="0 0 18 18"><path d="M1 1h15v11h-8l-4 4v-4H1z" fill="#fff"/><path d="M4 4h9M4 6.500h9M4 9h6" stroke="#1b2a40"/></svg>
            <span class="count">1</span>
        </button>
        <span class="peek"></span>
    </div>

</div>

</body>
</html>
```
FILE: styles.css
```css
* {
    box-sizing: border-box;
}

body {
    margin: 0;
    background-color: #fff;
    font-family: "Noto Sans", "Open Sans", sans-serif;
    font-size: 11px;
    line-height: 14px;
    color: #15428b;
}

button {
    margin: 0;
    padding: 0;
    border: none;
    background: none;
    font: inherit;
    color: inherit;
}

svg {
    display: block;
    flex: none;
}

a {
    color: inherit;
    text-decoration: none;
}

.screen {
    margin-right: 134px;
}

/* small drop-down triangle */
.arrow {
    display: inline-block;
    flex: none;
    border: 3px solid transparent;
    border-top-color: #567db1;
    border-bottom: none;
}

.arrow.dark {
    border-top-color: #1e3a6e;
}

.arrow.up {
    border-top: none;
    border-bottom: 3px solid #9a9a9a;
}

/* Title bar */
.titlebar {
    position: relative;
    display: grid;
    grid-template-columns: 1fr auto 1fr;
    align-items: center;
    height: 26px;
}

.title {
    margin: 0;
    font-size: 12px;
    font-weight: normal;
    color: #000;
}

.quick {
    display: flex;
    align-items: center;
    align-self: start;
    padding-left: 38px;
}

.quick-bar {
    display: flex;
    align-items: center;
    gap: 6px;
    height: 24px;
    padding: 0 12px 0 14px;
    border: 1px solid #a3a8b0;
    border-left: none;
    border-radius: 0 12px 12px 0;
    background: linear-gradient(#fff, #eef1f5);
}

.quick-more {
    margin-left: 8px;
    padding-top: 2px;
    border-top: 1px solid #1e3a6e;
    line-height: 3px;
}

.window-buttons {
    display: flex;
    justify-content: flex-end;
    gap: 34px;
    padding-right: 19px;
}

.office {
    position: absolute;
    left: 2px;
    top: 2px;
    z-index: 2;
}

/* Tabs */
.tabs {
    display: flex;
    align-items: stretch;
    height: 23px;
    padding-left: 48px;
    background-color: #bfdbff;
}

.tab {
    padding: 6px 15px 0;
}

.tab.active {
    margin: 2px 1px 0 0;
    padding: 4px 11px 0;
    border: 1px solid #9dbfe8;
    border-bottom: none;
    border-radius: 4px 4px 0 0;
    background: linear-gradient(#f6faff, #e4edf8);
}

.help {
    margin: 0 4px 2px auto;
}

/* Ribbon */
.ribbon {
    display: flex;
    gap: 3px;
    height: 91px;
    padding: 2px;
    border: 1px solid #8db2e3;
    border-bottom: 2px solid #8fb4de;
    border-radius: 4px;
    background: linear-gradient(#dbe6f4, #cfdff0 16px, #c9d9ed 17px, #d8e7f6 70px, #def5fc);
}

.group {
    display: flex;
    flex-direction: column;
    flex: none;
    border: 1px solid #9fc0e4;
    border-radius: 4px;
    background: linear-gradient(#dfe9f5, #d2e0f0 16px, #c9daee 17px, #dbe8f7);
    overflow: hidden;
}

.clipboard {
    width: 164px;
}

.font {
    width: 262px;
}

.paragraph {
    width: 210px;
}

.styles {
    width: 575px;
}

.editing {
    width: 83px;
}

.group-body {
    display: flex;
    flex: 1;
}

.group-label {
    position: relative;
    height: 15px;
    padding-right: 18px;
    background-color: #c1d8f0;
    line-height: 16px;
    text-align: center;
    color: #3e6aaa;
}

.group-label.plain {
    padding-right: 0;
}

/* dialog launcher in the group corner */
.launch {
    position: absolute;
    right: 5px;
    top: 3px;
    width: 8px;
    height: 8px;
    border: 1px solid #7695bf;
    border-right-color: #c1d8f0;
    border-bottom-color: #c1d8f0;
    background: linear-gradient(135deg, #e4effb 50%, #567db1 50%);
}

.paste {
    display: flex;
    flex-direction: column;
    align-items: center;
    width: 48px;
    padding-top: 3px;
    gap: 4px;
}

.stack {
    display: flex;
    flex-direction: column;
    gap: 6px;
    padding: 4px 0 0 1px;
}

.line {
    display: flex;
    align-items: center;
    gap: 3px;
    height: 16px;
    white-space: nowrap;
}

.editing .stack {
    padding-left: 5px;
}

.editing .line {
    gap: 2px;
}

.disabled {
    color: #8d8d8d;
}

.rows {
    flex-direction: column;
    gap: 7px;
    padding: 9px 3px 0;
}

.tool-row {
    display: flex;
    gap: 4px;
}

.paragraph .tool-row {
    gap: 3px;
}

.btns {
    display: flex;
    height: 22px;
    border: 1px solid #92b3dc;
    border-radius: 3px;
    background: linear-gradient(#dbe7f5, #cddcf0 50%, #bfd3ec 50%, #d2e2f5);
}

.btns button {
    display: flex;
    align-items: center;
    justify-content: center;
    width: 23px;
    color: #222;
}

.btns.narrow button {
    width: 22px;
}

.btns button + button {
    border-left: 1px solid #b4cbe8;
}

.btns .drop {
    width: 32px;
    gap: 2px;
}

.font .btns .serif.drop {
    width: 33px;
    gap: 4px;
}

.btns .serif {
    font-family: "Liberation Serif", serif;
    font-size: 14px;
    font-weight: bold;
}

.btns .big {
    font-size: 17px;
}

.btns .small {
    font-size: 12px;
}

.btns .x {
    font-weight: bold;
    font-size: 13px;
}

.btns sup,
.btns sub {
    font-size: 8px;
    line-height: 8px;
    color: #2f5fb5;
}

.btns sup {
    align-self: flex-start;
    margin-top: 1px;
}

.btns sub {
    align-self: flex-end;
    margin-bottom: 2px;
}

.btns .pilcrow {
    font-size: 16px;
    font-weight: bold;
}

.btns .on {
    background: linear-gradient(#fbdbb5, #fdb35a 50%, #fee08a);
}

.combos {
    display: flex;
}

.combo {
    position: relative;
    width: 43px;
    height: 22px;
    border: 1px solid #abc6e8;
    background-color: #f0f6fd;
}

.combo.wide {
    width: 136px;
}

.combo + .combo {
    border-left: none;
}

.combo::after {
    content: "";
    position: absolute;
    right: 4px;
    top: 8px;
    border: 3px solid transparent;
    border-top-color: #567db1;
    border-bottom: none;
    pointer-events: none;
}

.combo select {
    width: 100%;
    height: 20px;
    padding: 0 13px 0 2px;
    border: none;
    background: none;
    appearance: none;
    font: inherit;
    color: #000;
}

/* Style gallery */
.gallery {
    display: flex;
    width: 522px;
    height: 60px;
    margin: 4px 0 0 4px;
    border: 1px solid #b4cfec;
    border-radius: 3px;
    background-color: #d5e5f6;
}

.style {
    display: flex;
    flex-direction: column;
    justify-content: space-between;
    align-items: center;
    flex: none;
    width: 72px;
    height: 56px;
    margin-top: 1px;
    border: 4px solid transparent;
    background-color: #fff;
    background-clip: padding-box;
    overflow: hidden;
    white-space: nowrap;
    color: #000;
}

.style.selected {
    padding: 1px;
    border: 3px solid #f3a93c;
    border-bottom-color: #fccf45;
    border-radius: 2px;
    outline: 1px solid #c58b3c;
    outline-offset: -1px;
    background-clip: border-box;
}

.sample {
    display: flex;
    align-items: center;
    align-self: stretch;
    flex: 1;
    max-height: 31px;
    margin: 0 2px;
    font-size: 12px;
    overflow: hidden;
}

.style-name {
    margin-bottom: 2px;
    line-height: 15px;
    color: #00005e;
}

.heading1,
.heading2,
.subtitle {
    font-family: "Noto Serif", "DejaVu Serif", serif;
    font-weight: bold;
    font-size: 17px;
    color: #365f91;
}

.heading2 {
    font-size: 15px;
    color: #4f81bd;
}

.headline {
    font-family: "Liberation Serif", serif;
    font-size: 31px;
    line-height: 30px;
    color: #17365d;
}

.subtitle {
    font-weight: normal;
    font-style: italic;
    font-size: 15px;
    color: #4f81bd;
}

.emphasis {
    font-style: italic;
    color: #808080;
}

.gallery-scroll {
    display: flex;
    flex-direction: column;
    flex: 1;
    margin-left: 1px;
}

.gallery-scroll button {
    display: flex;
    align-items: center;
    justify-content: center;
    flex: 1;
    border: 1px solid #b0cbe9;
    background: linear-gradient(#dcebfb, #c2d8f2);
}

.gallery-scroll .off {
    background: linear-gradient(#f2f2f2, #dcdcdc);
}

.more {
    display: flex;
    padding-top: 3px;
    border-top: 1px solid #567db1;
}

.change {
    display: flex;
    flex-direction: column;
    align-items: center;
    width: 46px;
    padding-top: 4px;
}

.change svg {
    margin-bottom: 2px;
}

.change span {
    line-height: 13px;
}

.change .arrow {
    vertical-align: middle;
}

/* Document area */
.workspace {
    display: grid;
    grid-template-columns: 24px 1fr 18px;
    grid-template-rows: 26px 48vh;
    background-color: #9abae3;
}

.corner {
    padding-top: 2px;
}

.corner button {
    display: flex;
    align-items: center;
    justify-content: center;
    width: 24px;
    height: 24px;
    border: 1px solid #4a78c8;
    background-color: #b6cef0;
}

.corner svg {
    border: 1px solid #4a78c8;
    background-color: #e3edfb;
}

.ruler-row {
    display: flex;
    justify-content: center;
    padding-top: 7px;
}

.ruler {
    position: relative;
    display: grid;
    grid-template-columns: repeat(21, 1fr);
    width: 796px;
    height: 13px;
    border: 1px solid #cfe0f7;
    background: linear-gradient(90deg, #b0c8eb 12%, #fff 12%, #fff 88%, #b0c8eb 88%);
    font-family: "DejaVu Sans", sans-serif;
    font-size: 9px;
    line-height: 12px;
    text-align: center;
    color: #555;
}

.ruler span {
    background:
        linear-gradient(#555, #555) 0 50% / 1px 5px no-repeat,
        linear-gradient(#555, #555) 25% 50% / 1px 2px no-repeat,
        linear-gradient(#555, #555) 75% 50% / 1px 2px no-repeat;
}

/* default tab stops below the ruler */
.ruler::after {
    content: "";
    position: absolute;
    left: 95px;
    right: 96px;
    top: 14px;
    height: 3px;
    background: repeating-linear-gradient(90deg, transparent 0 46px, #7f8fa6 46px 47px);
}

.marker {
    position: absolute;
    top: -4px;
}

.marker.left {
    left: 88px;
}

.marker.right {
    right: 91px;
}

.vruler-col {
    padding: 16px 5px 0;
    overflow: hidden;
}

.vruler {
    display: grid;
    grid-template-rows: repeat(14, 1fr);
    height: 530px;
    border: 1px solid #cfe0f7;
    background: linear-gradient(#b0c8eb 18%, #fff 18%);
    font-family: "DejaVu Sans", sans-serif;
    font-size: 9px;
    line-height: 12px;
    text-align: center;
    color: #555;
}

.vruler span {
    width: 12px;
    writing-mode: vertical-rl;
    transform: rotate(180deg);
    background:
        linear-gradient(#555, #555) 50% 100% / 5px 1px no-repeat,
        linear-gradient(#555, #555) 50% 25% / 2px 1px no-repeat,
        linear-gradient(#555, #555) 50% 75% / 2px 1px no-repeat;
}

.canvas {
    position: relative;
    display: flex;
    justify-content: center;
    padding-top: 16px;
    overflow: hidden;
    background: linear-gradient(#9dbde8, #80a2d0 32%, #557caf 71%, #6692d0);
}

.swoosh {
    position: absolute;
    left: 0;
    top: 0;
}

.page {
    position: relative;
    width: 796px;
    padding: 98px 98px 0 96px;
    border: 1px solid #555;
    border-bottom: none;
    background-color: #fff;
    box-shadow: 3px 3px 6px rgba(20, 40, 80, 0.7);
    font-family: "DejaVu Sans", Verdana, sans-serif;
    color: #000;
}

.doc-title {
    display: flex;
    align-items: flex-start;
    gap: 6px;
    margin: 0 0 12px 2px;
    font-size: 12px;
    line-height: 14px;
}

.typo {
    text-decoration: underline wavy #e00000 1px;
    text-underline-offset: 1px;
    text-decoration-skip-ink: none;
}

.standings {
    width: 600px;
    table-layout: fixed;
    border-collapse: collapse;
    font-size: 10px;
    line-height: 11px;
    text-align: center;
    white-space: nowrap;
}

.standings th,
.standings td {
    padding: 2px 0 0;
}

.standings thead th {
    padding: 1px 0 0;
}

.c-no {
    width: 19px;
}

.c-name {
    width: 174px;
}

.c-m {
    width: 14px;
}

.c-pkt {
    width: 22px;
}

.c-n {
    width: 13px;
}

.c-s {
    width: 12px;
}

.c-goals {
    width: 42px;
}

.c-wide {
    width: 27px;
}

.standings thead tr {
    height: 12px;
}

.heads {
    background-color: #b71c1c;
    color: #fff;
}

.heads .name {
    text-align: left;
}

.standings tbody tr {
    height: 14px;
    background-color: #f4f4f4;
}

.standings tbody tr:nth-child(odd) {
    background-color: #dedede;
}

.standings tbody tr:nth-child(5n+4) {
    height: 13px;
}

.standings tbody .last {
    height: 24px;
}

.standings td.name {
    padding-left: 3px;
    text-align: left;
    font-size: 11px;
    color: #1a66f0;
}

.after-table {
    display: flex;
    justify-content: space-between;
    margin: 1px -23px 0 -2px;
}

.caret {
    width: 2px;
    height: 17px;
    background-color: #000;
}

.paste-options {
    display: flex;
    margin-top: 2px;
    padding: 1px;
    border: 1px solid #fdb462;
}

/* Scroll bar */
.scroll-col {
    grid-column: 3;
    grid-row: 1 / 3;
    display: flex;
    flex-direction: column;
    background-color: #a3c1ee;
}

.split {
    width: 9px;
    height: 2px;
    margin: 5px 4px 2px;
    background-color: #333f55;
}

.ruler-toggle {
    display: flex;
    justify-content: center;
    height: 16px;
    border: 1px solid #8494ad;
    background-color: #cdd6e3;
}

.track {
    display: flex;
    flex-direction: column;
    flex: 1;
    margin: 0 1px;
    background: linear-gradient(90deg, #6c8cb9, #809fca);
}

.track button {
    height: 17px;
    line-height: 0;
}

.tri {
    display: inline-block;
    border: 5px solid transparent;
    border-top-color: #3d5076;
    border-bottom: none;
}

.tri.up {
    border-top: none;
    border-bottom: 5px solid #3d5076;
}

.track .down {
    margin-top: auto;
}

.thumb {
    height: 43%;
    border: 1px solid #6a83ad;
    border-radius: 2px;
    background:
        repeating-linear-gradient(#7c93b8 0 1px, transparent 1px 2px) 50% 50% / 7px 7px no-repeat,
        linear-gradient(90deg, #f5f9ff, #cfdff5 50%, #b3cbee);
}

.browse {
    display: flex;
    flex-direction: column;
    align-items: center;
    justify-content: space-around;
    height: 51px;
}

/* Status bar */
.statusbar {
    display: flex;
    height: 22px;
    border-top: 1px solid #567db1;
    background: linear-gradient(#e0edff, #cfe1fb 6px, #b0cdf5 7px, #d6e6fc);
}

.status {
    display: flex;
    align-items: center;
    padding: 0 8px 2px;
    border-right: 1px solid #8fb0dc;
    box-shadow: 1px 0 0 #f0f6ff;
    color: #15326b;
}

.view-area {
    display: flex;
    align-items: center;
    margin-left: auto;
    padding: 0 5px;
    border-left: 1px solid #6d93c8;
    background: linear-gradient(#bdd6f7, #a5c6f2 6px, #82aee8 7px, #abcaf4);
}

.views {
    display: flex;
    height: 18px;
    border: 1px solid #6a94cc;
    border-radius: 2px;
    background: linear-gradient(#d3e3f8, #b9d2f3);
}

.views button {
    display: flex;
    align-items: center;
    justify-content: center;
    width: 18px;
}

.views .on {
    background: linear-gradient(#fbdbb5, #fdc36a);
}

.percent {
    margin: 0 8px;
    color: #15326b;
}

.zoom-range {
    width: 102px;
    height: 16px;
    margin: 0;
    appearance: none;
    background: linear-gradient(#4a6590, #4a6590) 0 50% / 100% 1px no-repeat;
}

.zoom-range::-webkit-slider-thumb {
    appearance: none;
    width: 8px;
    height: 13px;
    border: 1px solid #4a6590;
    border-radius: 1px 1px 4px 4px;
    background-color: #dce8f9;
}

/* Taskbar */
.taskbar {
    display: flex;
    height: 40px;
    background: linear-gradient(90deg, #20353e, #213841 45%, #1d2c3e 65%, #1b2842);
    color: #e8ecef;
}

.system-apps,
.apps {
    display: flex;
}

.system-apps {
    padding-right: 2px;
}

.system-apps button {
    display: flex;
    align-items: center;
    justify-content: center;
    width: 48px;
}

.apps button {
    display: flex;
    align-items: center;
    justify-content: center;
    width: 49px;
    border-bottom: 2px solid transparent;
}

.apps .open {
    background: linear-gradient(#76b9ed, #76b9ed) 50% 100% / 40px 2px no-repeat border-box;
}

.apps .current {
    background:
        linear-gradient(#76b9ed, #76b9ed) 50% 100% / 48px 2px no-repeat border-box,
        #4b5d66 border-box;
}

.toolbar-docs {
    display: flex;
    align-items: center;
    gap: 7px;
    margin-left: auto;
    margin-right: 36px;
}

.chev {
    align-self: flex-start;
    padding-top: 1px;
    font-size: 16px;
    color: #fff;
}

.weather {
    display: flex;
    align-items: center;
    gap: 9px;
    margin-right: 17px;
    font-size: 13px;
}

.tray {
    display: flex;
    align-items: center;
    gap: 8px;
    margin-right: 9px;
}

.clock {
    display: flex;
    flex-direction: column;
    justify-content: center;
    align-items: center;
    gap: 4px;
    margin-right: 17px;
    color: #fff;
}

.notify {
    position: relative;
    width: 26px;
    margin-right: 10px;
}

.count {
    position: absolute;
    left: 8px;
    top: 19px;
    width: 16px;
    height: 16px;
    border: 1px solid #8f98a3;
    border-radius: 50%;
    background-color: #333c48;
    color: #fff;
}

.peek {
    width: 5px;
    border-left: 1px solid #6b7686;
}
```
